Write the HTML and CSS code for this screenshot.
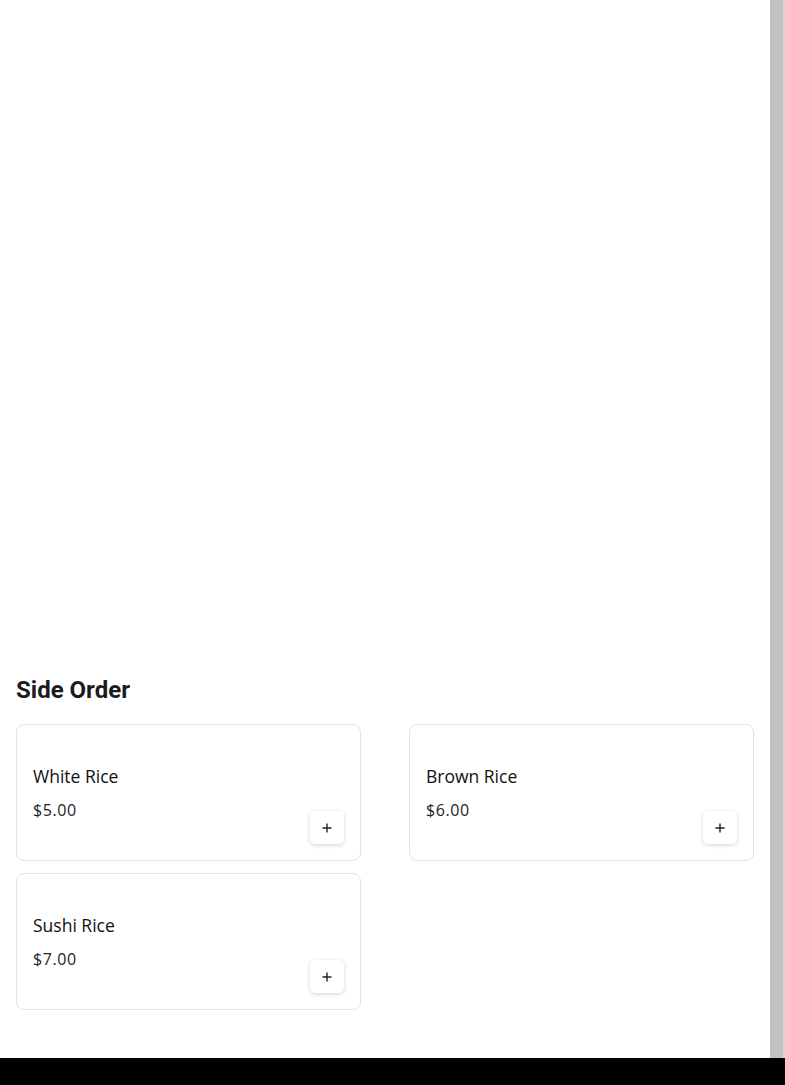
FILE: index.html
```html
<!DOCTYPE html>
<html>
<head>
<meta charset="utf-8">
<link rel="stylesheet" href="styles.css">
</head>
<body>
<div class="page">
  <main class="main">
    <div class="hero"></div>
    <section class="section">
      <h2 class="section-title">Side Order</h2>
      <div class="grid">
        <div class="card">
          <div class="info">
            <div class="name">White Rice</div>
            <div class="price">$5.00</div>
          </div>
          <button class="add"><svg width="12" height="12" viewBox="0 0 12 12"><path d="M6 1.5v9M1.5 6h9" stroke="#222" stroke-width="1.4" fill="none"/></svg></button>
        </div>
        <div class="card">
          <div class="info">
            <div class="name">Brown Rice</div>
            <div class="price">$6.00</div>
          </div>
          <button class="add"><svg width="12" height="12" viewBox="0 0 12 12"><path d="M6 1.5v9M1.5 6h9" stroke="#222" stroke-width="1.4" fill="none"/></svg></button>
        </div>
        <div class="card">
          <div class="info">
            <div class="name">Sushi Rice</div>
            <div class="price">$7.00</div>
          </div>
          <button class="add"><svg width="12" height="12" viewBox="0 0 12 12"><path d="M6 1.5v9M1.5 6h9" stroke="#222" stroke-width="1.4" fill="none"/></svg></button>
        </div>
      </div>
    </section>
  </main>
  <div class="scrollbar"></div>
</div>
<div class="footer-bar"></div>
</body>
</html>
```
FILE: styles.css
```css
* { box-sizing: border-box; }
html, body { margin: 0; padding: 0; background: #fff; }
body { font-family: "Open Sans", "DejaVu Sans", sans-serif; color: #111; }
.page { display: flex; min-height: 1085px; }
.main { width: 770px; padding: 0 16px; }
.hero { height: 676px; }
.section-title {
  font-family: Roboto, sans-serif;
  font-weight: 700;
  font-size: 24px;
  line-height: 28px;
  margin: 0 0 20px;
  color: #1c1c1c;
}
.grid {
  display: grid;
  grid-template-columns: 1fr 1fr;
  column-gap: 48px;
  row-gap: 12px;
}
.card {
  border: 1px solid #e3e3e3;
  border-radius: 8px;
  height: 137px;
  padding: 16px;
  display: flex;
  justify-content: space-between;
  align-items: flex-end;
}
.info { align-self: flex-start; padding-top: 23px; }
.name { font-size: 17.5px; line-height: 24px; font-weight: 500; }
.price { font-size: 16px; line-height: 24px; margin-top: 10px; color: #222; letter-spacing: 0.6px; }
.add {
  width: 34px; height: 33px;
  border: none;
  border-radius: 5px;
  background: #fff;
  box-shadow: 0 1px 4px rgba(0,0,0,0.18);
  display: flex; align-items: center; justify-content: center;
  padding: 0;
}
.scrollbar {
  width: 15px;
  background: #c1c1c1;
  border-right: 2px solid #d6d6d6;
}
.footer-bar {
  position: fixed;
  left: 0; right: 0; bottom: 0;
  height: 27px;
  background: #000;
}
```
